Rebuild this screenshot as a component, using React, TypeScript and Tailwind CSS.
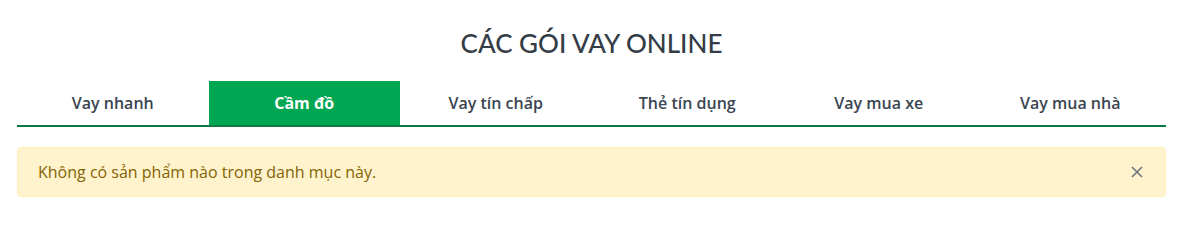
import { useState } from 'react'

const tabs = ['Vay nhanh', 'Cầm đồ', 'Vay tín chấp', 'Thẻ tín dụng', 'Vay mua xe', 'Vay mua nhà']

export default function App() {
  const [active, setActive] = useState(1)
  const [open, setOpen] = useState(true)

  return (
    <div className="bg-white px-[17px] pt-[28px] font-['Open_Sans','Noto_Sans',sans-serif]">
      <h2 className="text-center font-['Lato',sans-serif] text-[26px] leading-[30px] font-medium text-[#343d47]">CÁC GÓI VAY ONLINE</h2>

      {/* Tabs */}
      <div className="mt-[23px] grid grid-cols-6 border-b-2 border-[#0b7a43]">
        {tabs.map((t, i) => (
          <button
            key={t}
            onClick={() => setActive(i)}
            className={`h-[44px] text-[16px] ${i === active ? 'bg-[#00a651] text-white font-bold' : 'font-semibold text-[#3a4551]'}`}
          >
            {t}
          </button>
        ))}
      </div>

      {/* Alert */}
      {open && (
        <div className="mt-[20px] flex items-center justify-between rounded-[4px] border border-[#ffeeba] bg-[#fff3cd] py-[12px] pl-[20px] pr-[22px] text-[16px] leading-[24px] text-[#856404]">
          <span>Không có sản phẩm nào trong danh mục này.</span>
          <button onClick={() => setOpen(false)} className="text-[#6c757d]">
            <svg width="12" height="12" viewBox="0 0 12 12" fill="none" stroke="currentColor" strokeWidth="1.6">
              <path d="M1 1l10 10M11 1L1 11" />
            </svg>
          </button>
        </div>
      )}
    </div>
  )
}
